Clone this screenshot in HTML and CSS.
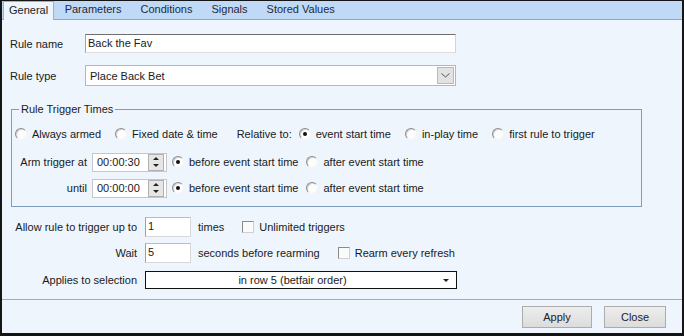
FILE: index.html
```html
<!DOCTYPE html>
<html lang="en">
<head>
  <meta charset="UTF-8">
  <title>Rule Editor</title>
  <link rel="stylesheet" href="styles.css">
</head>
<body>
  <div class="window">
    <div class="tabs">
      <div class="tab active">General</div>
      <div class="tab">Parameters</div>
      <div class="tab">Conditions</div>
      <div class="tab">Signals</div>
      <div class="tab">Stored Values</div>
    </div>

    <div class="page">
      <div class="row name-row">
        <span class="lbl">Rule name</span>
        <div class="textbox wide">Back the Fav</div>
      </div>

      <div class="row type-row">
        <span class="lbl">Rule type</span>
        <div class="combo">
          <span class="combo-text">Place Back Bet</span>
          <span class="combo-btn">
            <svg width="9" height="5" viewBox="0 0 9 5"><polyline points="0.5,0.5 4.5,4 8.5,0.5" fill="none" stroke="#555" stroke-width="1"/></svg>
          </span>
        </div>
      </div>

      <fieldset class="group">
        <legend>Rule Trigger Times</legend>

        <div class="grow first">
          <span class="opt"><span class="radio"></span>Always armed</span>
          <span class="opt"><span class="radio"></span>Fixed date &amp; time</span>
          <span class="rel">Relative to:</span>
          <span class="opt"><span class="radio on"></span>event start time</span>
          <span class="opt"><span class="radio"></span>in-play time</span>
          <span class="opt"><span class="radio"></span>first rule to trigger</span>
        </div>

        <div class="grow second">
          <span class="glbl">Arm trigger at</span>
          <div class="spin">
            <span class="spin-text">00:00:30</span>
            <span class="spin-btns"><span class="up"></span><span class="down"></span></span>
          </div>
          <span class="opt tight"><span class="radio on"></span>before event start time</span>
          <span class="opt tight"><span class="radio"></span>after event start time</span>
        </div>

        <div class="grow third">
          <span class="glbl">until</span>
          <div class="spin">
            <span class="spin-text">00:00:00</span>
            <span class="spin-btns"><span class="up"></span><span class="down"></span></span>
          </div>
          <span class="opt tight"><span class="radio on"></span>before event start time</span>
          <span class="opt tight"><span class="radio"></span>after event start time</span>
        </div>
      </fieldset>

      <div class="row allow-row">
        <span class="lbl2">Allow rule to trigger up to</span>
        <div class="textbox num">1</div>
        <span class="after">times</span>
        <span class="chk-opt"><span class="check"></span>Unlimited triggers</span>
      </div>

      <div class="row wait-row">
        <span class="lbl2">Wait</span>
        <div class="textbox num">5</div>
        <span class="after">seconds before rearming</span>
        <span class="chk-opt"><span class="check"></span>Rearm every refresh</span>
      </div>

      <div class="row sel-row">
        <span class="lbl2">Applies to selection</span>
        <div class="dropdown">
          <span class="dropdown-text">in row 5 (betfair order)</span>
          <span class="dropdown-arrow"></span>
        </div>
      </div>
    </div>

    <div class="footer">
      <button class="btn apply">Apply</button>
      <button class="btn close">Close</button>
    </div>
  </div>
</body>
</html>
```

FILE: styles.css
```css
* {
  box-sizing: border-box;
}
body {
  margin: 0;
  font-family: "Liberation Sans", Arial, sans-serif;
  font-size: 11px;
  color: #1a1a1a;
  background: #fff;
  white-space: nowrap;
}
.window {
  width: 684px;
  height: 336px;
  border: 2px solid #151515;
  border-top-width: 1px;
  border-bottom-width: 3px;
  background: #eef5fd;
  display: flex;
  flex-direction: column;
}

/* tab strip */
.tabs {
  height: 19px;
  flex: none;
  background: #c0d9f7;
  border-bottom: 1px solid #8ea8c6;
  display: flex;
  align-items: flex-end;
  padding-left: 1px;
}
.tab {
  height: 18px;
  line-height: 17px;
  padding: 0 9.5px;
  color: #1e2a3a;
}
.tab.active {
  height: 19px;
  margin-bottom: -1px;
  margin-right: 1px;
  padding: 0 5px;
  background: #eef5fd;
  border: 1px solid #98b2ce;
  border-bottom: none;
  color: #222;
}

/* main page */
.page {
  flex: 1;
  padding: 14px 0 0 8px;
}
.row {
  display: flex;
  align-items: center;
}
.lbl {
  width: 75px;
  flex: none;
}
.name-row {
  height: 19px;
}
.type-row {
  height: 21px;
  margin-top: 12px;
}
.textbox {
  background: #fff;
  height: 19px;
  line-height: 17px;
  padding-left: 2px;
  border: 1px solid;
  border-color: #6f6f6f #d4d4d4 #dcdcdc #a3a3a3;
}
.textbox.wide {
  width: 371px;
}
.combo {
  width: 371px;
  height: 21px;
  background: #fff;
  border: 1px solid #b4b6ba;
  display: flex;
  align-items: center;
  padding: 1px;
}
.combo-text {
  flex: 1;
  padding-left: 3px;
}
.combo-btn {
  width: 17px;
  height: 17px;
  background: #e2e2e2;
  border: 1px solid #b9b9b9;
  display: flex;
  align-items: center;
  justify-content: center;
}

/* group box */
.group {
  margin: 16px 0 0 1px;
  width: 631px;
  border: 1px solid #7f9dbb;
  padding: 0 0 8px 3px;
}
.group legend {
  padding: 0 2px;
  margin-left: 4px;
  line-height: 14px;
}
.grow {
  display: flex;
  align-items: center;
  height: 20px;
}
.grow.first {
  margin-top: 8px;
}
.grow.second {
  margin-top: 8px;
}
.grow.third {
  margin-top: 6px;
}
.opt {
  display: flex;
  align-items: center;
  margin-right: 14px;
}
.opt.tight {
  margin-right: 8px;
}
.rel {
  margin: 0 7px 0 5px;
}
.radio {
  width: 12px;
  height: 12px;
  border-radius: 50%;
  background: #fdfdfd;
  border: 1px solid;
  border-color: #8c8c8c #f4f4f4 #f4f4f4 #8c8c8c;
  box-shadow: inset 1px 1px 0 #d4d4d4;
  margin-right: 5px;
  position: relative;
}
.radio.on::after {
  content: "";
  position: absolute;
  left: 3px;
  top: 3px;
  width: 4px;
  height: 4px;
  border-radius: 50%;
  background: #111;
}
.glbl {
  width: 72px;
  text-align: right;
  flex: none;
}
.spin {
  width: 75px;
  height: 19px;
  margin: 0 5px 0 5px;
  background: #fff;
  border: 1px solid #c6c6c6;
  display: flex;
  align-items: center;
}
.spin-text {
  flex: 1;
  padding-left: 4px;
}
.spin-btns {
  width: 16px;
  height: 17px;
  margin-right: 2px;
  background: #e6e6e6;
  border: 1px solid #b0b0b0;
  display: flex;
  flex-direction: column;
  align-items: center;
  justify-content: space-around;
}
.spin-btns .up,
.spin-btns .down {
  width: 0;
  height: 0;
  border-left: 3px solid transparent;
  border-right: 3px solid transparent;
}
.spin-btns .up {
  border-bottom: 3px solid #222;
}
.spin-btns .down {
  border-top: 3px solid #222;
}

/* trigger count rows */
.lbl2 {
  width: 127px;
  flex: none;
  text-align: right;
}
.allow-row {
  height: 20px;
  margin-top: 10px;
}
.wait-row {
  height: 20px;
  margin-top: 6px;
}
.textbox.num {
  width: 46px;
  height: 20px;
  margin-left: 8px;
  border-color: #bcbcbc #d8d8d8 #d8d8d8 #a0a0a0;
}
.after {
  margin-left: 7px;
}
.chk-opt {
  display: flex;
  align-items: center;
  margin-left: 18px;
}
.check {
  width: 12px;
  height: 12px;
  background: #fbfbfb;
  border: 1px solid;
  border-color: #8a8a8a #d0d0d0 #d0d0d0 #8a8a8a;
  margin-right: 5px;
}
.sel-row {
  height: 18px;
  margin-top: 8px;
}
.dropdown {
  width: 312px;
  height: 18px;
  margin-left: 8px;
  background: #fff;
  border: 1px solid #111;
  display: flex;
  align-items: center;
}
.dropdown-text {
  flex: 1;
  text-align: center;
}
.dropdown-arrow {
  width: 0;
  height: 0;
  margin: 0 7px 0 4px;
  border-left: 3px solid transparent;
  border-right: 3px solid transparent;
  border-top: 3px solid #222;
}

/* buttons */
.footer {
  height: 34px;
  flex: none;
  border-top: 1px solid #a7a9ac;
  display: flex;
  justify-content: flex-end;
  align-items: flex-start;
  padding: 6px 16px 0 0;
  gap: 12px;
}
.btn {
  height: 22px;
  font-family: "Liberation Sans", Arial, sans-serif;
  font-size: 11px;
  color: #222;
  background: linear-gradient(#ededed, #dcdcdc);
  border: 1px solid #acacac;
  padding: 0;
}
.btn.apply {
  width: 70px;
}
.btn.close {
  width: 62px;
}
```
